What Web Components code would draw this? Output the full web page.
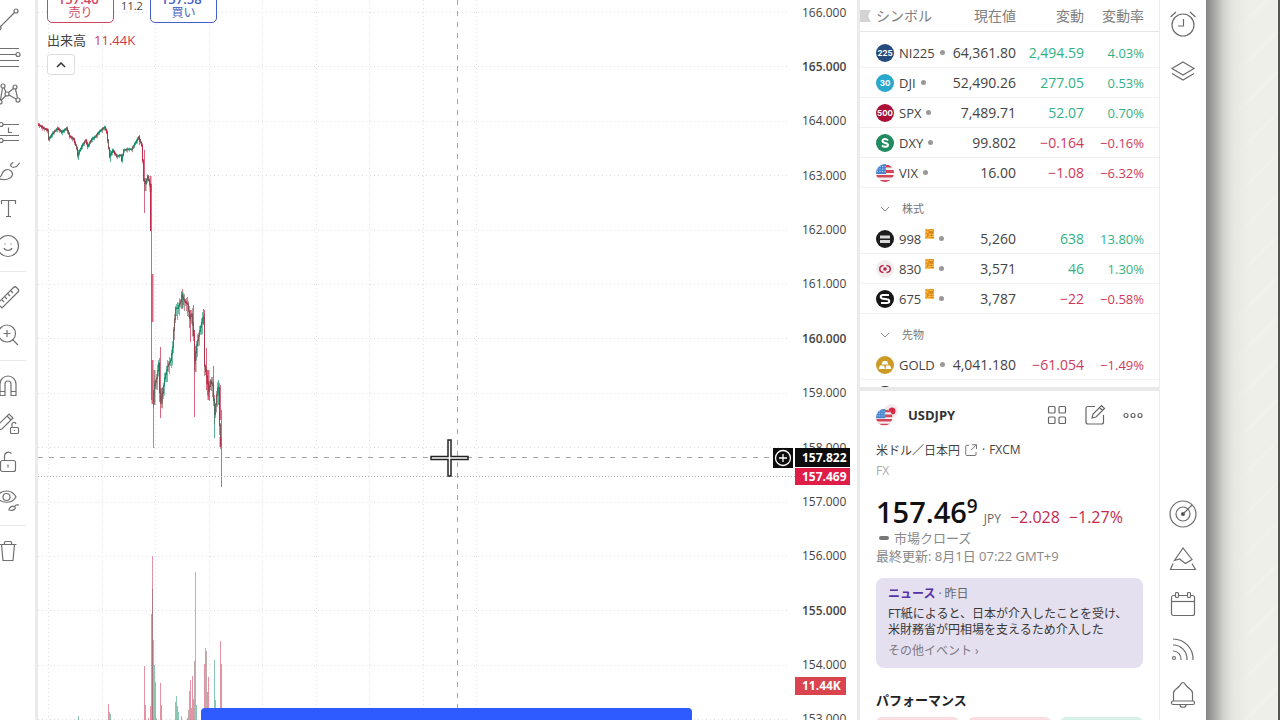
<!DOCTYPE html>
<html lang="ja">
<head>
<meta charset="utf-8">
<title>USDJPY チャート</title>
<style>
html,body{height:100%}
body{margin:0;overflow:hidden;background:#fff;color:#444;font-family:"Open Sans","Noto Sans CJK JP",sans-serif;font-size:12px}
</style>
</head>
<body>
<trading-app></trading-app>
<script>
const ICONS = {
  trend:'<path d="M6 23 20.500 8.500"/><circle cx="22" cy="7" r="2"/><circle cx="5" cy="24" r="2"/>',
  lines:'<path d="M2 6.500h23M2 12.500h20M2 18.500h23M2 24.500h23"/><circle cx="24" cy="12.500" r="2" fill="#fff"/>',
  pattern:'<circle cx="9" cy="6" r="2"/><circle cx="21" cy="7" r="2"/><circle cx="13" cy="14" r="2"/><circle cx="24" cy="20" r="2"/><circle cx="6" cy="22" r="2"/><path d="m10 8 2 4M19.500 8.500 14.500 12.500M21.500 9l2 9M15 15l7 4M7 20.500l5-5M8.500 8 6.500 20"/>',
  forecast:'<path d="M9 6.500h16M2 17.500h23M9 22.500h16M14.500 9.500v5h3.500"/><circle cx="7" cy="6.500" r="2"/><circle cx="7" cy="22.500" r="2"/>',
  brush:'<path d="M3 22c3 0 4-1 5-4 1-4 6-6 9-3s1 7-3 8c-4 1-7 1-11-1M26 7c-2 0-2 4-5 4-3 1-5-1-4-3 1-1 2-1 2-2"/>',
  text:'<path d="M7.500 10V6.500h14V10M14.500 6.500v16M12 22.500h5"/>',
  smile:'<circle cx="14" cy="14" r="10.500"/><path d="M10 16c1 3 7 3 8 0M11 11.500v1M17 11.500v1"/>',
  ruler:'<path d="m3.500 20.500 16-16c1-1 2-1 3 0l1.500 1.500c1 1 1 2 0 3l-16 16zM8 17l2 2M11 14l2 2M14 11l2 2M17 8l2 2"/>',
  zoom:'<circle cx="13" cy="12.500" r="8.500"/><path d="m19 19 5 5M9.500 12.500h7M13 9v7"/>',
  magnet:'<path d="M6 23.500V12a8 8 0 0 1 16 0v11.500h-5V12a3 3 0 0 0-6 0v11.500zM6 19.500h5M17 19.500h5"/>',
  penlock:'<path d="m3 20 1-5L15 4l4 4L8 19zM13 6l4 4"/><rect x="16.500" y="17.500" width="8" height="6" rx="1"/><path d="M18 17v-2a2 2 0 0 1 4-1M20.500 20v1"/>',
  lock:'<rect x="6.500" y="12.500" width="15" height="11" rx="2"/><path d="M10.500 12V8a4 4 0 0 1 7-2.500M14 16.500v3"/>',
  eye:'<path d="M3 11c4-8 15-8 19 0-4 7-15 7-19 0z"/><circle cx="12.500" cy="11" r="3.500"/><path d="M15 24c0-3 4-5 6-3 1 2-1 4-6 3zM21 20c1-2 2-1 4-1"/>',
  trash:'<path d="M5.500 7.500h17M7.500 7.500l1.500 16h10l1.500-16M10.500 7V5.500c0-1 .5-1 1-1h5c1 0 1 .5 1 1V7"/>',
  alarm:'<circle cx="14" cy="15" r="11"/><path d="M14.500 9v7H9M1.500 7 7 2M21 2l5.500 5"/>',
  layers:'<path d="M14 5 25 11.500 14 18 3 11.500zM3 16.500 14 23l11-6.500"/>',
  radar:'<circle cx="14" cy="14" r="13"/><circle cx="14" cy="14" r="7"/><circle cx="14" cy="14" r="1.500" fill="#222"/><path d="m14 14 9-9"/>',
  pyramid:'<path d="M14 3 5.500 15.500l5-1.500 6 4.500 6.500-4zM4 18.500 1.500 24.500h25L23 18.500"/>',
  calendar:'<rect x="2.500" y="5.500" width="23" height="20" rx="2"/><path d="M2.500 11.500h23"/><rect x="6.500" y="2.500" width="3" height="5" rx="1" fill="#fff"/><rect x="18.500" y="2.500" width="3" height="5" rx="1" fill="#fff"/>',
  feed:'<circle cx="5" cy="23" r="1.500"/><path d="M4 16a8 8 0 0 1 8 9M4 10a14 14 0 0 1 14 15M4 4a20 20 0 0 1 20 21"/>',
  bell:'<path d="M4.500 21V13c0-3 3-4 5.500-6.500 2-2 2-4 4-4s2 2 4 4C20.500 9 23.500 10 23.500 13v8"/><rect x="2.500" y="21" width="23" height="3.500" rx="1.500"/><path d="M11 25c0 3 6 3 6 0"/>',
  grid:'<rect x="5.500" y="5.500" width="6.500" height="6.500" rx="1"/><rect x="16" y="5.500" width="6.500" height="6.500" rx="1"/><rect x="5.500" y="16" width="6.500" height="6.500" rx="1"/><rect x="16" y="16" width="6.500" height="6.500" rx="1"/>',
  edit:'<path d="M14 5.500H7a2 2 0 0 0-2 2V21a2 2 0 0 0 2 2h13.500a2 2 0 0 0 2-2v-7M11 17l1-4 8.500-8.500 3 3L15 16zM18.500 6.500l3 3"/>',
  more:'<circle cx="7" cy="14.500" r="2"/><circle cx="14" cy="14.500" r="2"/><circle cx="21" cy="14.500" r="2"/>',
  external:'<path d="M10 4.500H5.500a2 2 0 0 0-2 2V23a2 2 0 0 0 2 2H22a2 2 0 0 0 2-2v-5M16 3.500h9V12M25 3.500l-11 11"/>'
};
const FLAG = '<clipPath id="f"><circle cx="9" cy="9" r="9"/></clipPath><g clip-path="url(#f)"><path fill="#f4f0f2" d="M0 0h18v18H0z"/><path fill="#d2465a" d="M9 1h9v2.500H9zM9 6h9v3H9zM0 11h18v2.500H0zM0 16h18v2H0z"/><path fill="#4a86d0" d="M0 0h10v10H0z"/><path stroke="#bcd8f5" stroke-dasharray="1 1.500" d="M1 2.500h9M1 5h9M1 7.500h9"/></g>';
const num = (bg,t) => `<circle cx="9" cy="9" r="9" fill="${bg}"/><text x="9" y="12" text-anchor="middle" font-family="Inter,sans-serif" font-weight="700" font-size="8" fill="#fff">${t}</text>`;
const LOGOS = {
  n225:num('#254a7c','225'), dji:num('#2aa8cc','30'), spx:num('#ac1037','500'),
  dxy:'<circle cx="9" cy="9" r="9" fill="#218a5e"/><path d="M12 6.500C10 4 6 5 6.500 7.300 7 9.500 12 8.500 12 11c0 2-4 2.600-6 .5" fill="none" stroke="#fff" stroke-width="2"/>',
  flag:FLAG,
  sbg:'<circle cx="9" cy="9" r="9" fill="#1c1c1c"/><path d="M4 5.500h10v3H4zM4 10h10v3H4z" fill="#d8d8d8"/>',
  mufg:'<circle cx="9" cy="9" r="9" fill="#f1eded"/><g fill="none" stroke="#b8244c" stroke-width="1.500"><path d="M7.500 5.500c-5 .5-5 6.500 0 7M10.500 5.500c5 .5 5 6.500 0 7"/></g><circle cx="9" cy="9" r="1.800" fill="#b8244c"/>',
  s675:'<circle cx="9" cy="9" r="9" fill="#161616"/><path d="M13 5H7C4 5 4 8.500 7 8.700l4 .5c3 .3 3 3.800 0 3.800H5" fill="none" stroke="#fff" stroke-width="2"/>',
  gold:'<circle cx="9" cy="9" r="9" fill="#cb9b24"/><path fill="#fff" d="M7 5h4l1.500 3.500h-7zM4 9.500h4L9 13H2.500zM10 9.500h4l1.500 3.500H9.500z"/>',
  dark:'<circle cx="9" cy="9" r="9" fill="#333"/>'
};
class Base extends HTMLElement{
  constructor(){super();this.attachShadow({mode:'open'})}
  connectedCallback(){this.shadowRoot.innerHTML='<style>*{box-sizing:border-box}button{font:inherit;color:inherit;background:none;border:0;padding:0;margin:0}a{color:inherit;text-decoration:none}'+this.css()+'</style>'+this.html()}
  css(){return''} html(){return'<slot></slot>'}
}
customElements.define('ui-icon',class extends Base{
  css(){return':host{display:block;width:28px;height:28px;flex:none}svg{display:block;width:100%;height:100%}'}
  html(){return`<svg viewBox="0 0 28 28" fill="none" stroke="currentColor" stroke-width="${this.getAttribute('stroke')||1.2}" aria-hidden="true">${ICONS[this.getAttribute('name')]}</svg>`}
});
customElements.define('symbol-logo',class extends Base{
  css(){return':host{display:block;width:18px;height:18px;flex:none}svg{display:block;width:100%;height:100%}'}
  html(){return`<svg viewBox="0 0 18 18" aria-hidden="true">${LOGOS[this.getAttribute('name')]}</svg>`}
});
customElements.define('drawing-toolbar',class extends Base{
  css(){return`:host{display:block;width:38px;flex:none;overflow:hidden;border-right:3px solid #ebebeb;color:#707070}
   nav{display:flex;flex-direction:column;margin-top:-1px}button{width:28px;height:38px;margin-left:-6px;display:grid;place-items:center;flex:none}
   hr{width:26px;height:1px;border:0;background:#e8e8e8;margin:6px 0;flex:none}`}
  html(){const b=(n,l)=>`<button aria-label="${l}"><ui-icon name="${n}"></ui-icon></button>`;
   return`<nav>${b('trend','トレンドライン')}${b('lines','フィボナッチ')}${b('pattern','パターン')}${b('forecast','予測')}${b('brush','ブラシ')}${b('text','テキスト')}${b('smile','アイコン')}<hr>${b('ruler','計測')}${b('zoom','ズーム')}<hr>${b('magnet','マグネット')}${b('penlock','描画モード維持')}${b('lock','ロック')}${b('eye','非表示')}<hr>${b('trash','削除')}</nav>`}
});
customElements.define('side-rail',class extends Base{
  css(){return`:host{display:flex;flex-direction:column;justify-content:space-between;width:47px;flex:none;border-left:1px solid #ececec;color:#6c6c6c;padding:1px 0 4px}
   div{display:flex;flex-direction:column}.top{gap:2px}button{height:45px;display:grid;place-items:center}`}
  html(){const b=(n,l)=>`<button aria-label="${l}"><ui-icon name="${n}"></ui-icon></button>`;
   return`<div class="top">${b('alarm','アラート')}${b('layers','オブジェクト')}</div><div>${b('radar','スクリーナー')}${b('pyramid','パイン')}${b('calendar','カレンダー')}${b('feed','ニュース')}${b('bell','通知')}</div>`}
});
customElements.define('price-plot',class extends Base{
  css(){return':host{display:block;min-width:0;min-height:0;overflow:hidden}svg{display:block;width:100%;height:100%}'}
  html(){
    const R='#c8284a',G='#17906c',D='#7c5a58';
    let s='';
    for(let i=0;i<14;i++){const y=Math.round(12+i*54.4)+.5;s+=`<path d="M38 ${y}H790" stroke="#dedede" stroke-dasharray="1 3"/>`}
    for(let i=0;i<9;i++){const x=Math.round(48+i*53.5)+.5;s+=`<path d="M${x} 0V720" stroke="#e4e4e4" stroke-dasharray="1 3"/>`}
    const vol=[[78,716,G],[108,704,R],[109,712,D],[110,714,G],[144,666,R],[145,705,R],[148,718,R],[150,706,R],[151,614,R],[152,556,R],[152,589,D],[153,640,D],[154,665,G],[155,682,D],[156,718,D],[160,683,R],[161,705,R],[175,702,G],[176,696,G],[177,706,D],[178,712,G],[181,716,G],[187,718,R],[188,710,D],[189,691,D],[190,680,R],[191,708,R],[192,676,R],[193,699,R],[194,661,D],[195,572,G],[196,705,G],[204,664,R],[205,648,D],[206,651,D],[207,692,R],[208,677,R],[214,660,G],[215,700,D],[220,641,R],[221,664,R]];
    for(const[x,y,c]of vol)s+=`<path d="M${x+.5} ${y}V720" stroke="${c}" stroke-opacity=".5"/>`;
    const k=[[38,124],[44,128],[48,130],[49,139],[53,133],[58,128],[62,132],[67,128],[70,136],[74,139],[77,148],[78,155],[82,146],[86,140],[88,146],[92,139],[96,136],[100,131],[105,127],[107,132],[109,148],[110,156],[113,150],[117,156],[121,155],[122,160],[124,150],[128,149],[132,149],[136,142],[139,137],[142,145],[143,160],[144,180],[146,183],[148,176],[150,184],[151,230]];
    const k2=[[153,402],[155,385],[157,378],[159,363],[160,392],[161,400],[163,393],[165,378],[168,366],[171,360],[173,347],[174,330],[176,308],[178,308],[181,301],[182,295],[185,301],[188,304],[190,318],[192,314],[194,335],[195,360],[197,345],[200,331],[203,318],[204,318],[205,366],[207,376],[209,391],[211,381],[213,385],[214,400],[215,414],[217,395],[218,388],[219,388],[220,425],[221,445]];
    const draw=(a,amp)=>{for(let i=0;i<a.length-1;i++){const[x0,y0]=a[i],[x1,y1]=a[i+1];
      for(let x=x0;x<x1;x++){const p=y0+(y1-y0)*(x-x0)/(x1-x0),q=y0+(y1-y0)*(x+1-x0)/(x1-x0);
       const w=amp*(1+((x*7)%5)/2),t=Math.min(p,q),b=Math.max(p,q),c=q>p?(x%4?R:D):(x%3?G:D);
       s+=`<path d="M${x+.5} ${t-w/2}V${b+w}" stroke="${c}" stroke-opacity=".6"/><path d="M${x+.5} ${t-.5}V${b+1}" stroke="${c}"/>`}}};
    draw(k,1.1);draw(k2,4);
    for(const[x,a,b,c,w]of[[78,150,160,G,1],[110,150,162,G,1],[139,135,145,R,1],[144,150,213,R,1],[145,178,191,D,2],[150,176,192,R,2],[151,184,400,R,1],[152,274,322,R,2],[152,360,404,R,2],[153,390,448,G,1],[154,370,405,D,2],[160,347,418,R,1],[161,388,404,D,3],[182,292,308,G,2],[190,310,342,R,1],[193,305,330,R,1],[194,330,417,R,1],[195,346,372,D,2],[203,309,325,G,1],[204,310,366,R,1],[206,348,390,R,1],[208,370,400,R,2],[213,366,390,R,1],[214,398,438,G,1],[218,380,405,G,1],[220,385,420,R,1],[220,437,447,R,2],[221,410,487,R,1]])
      s+=`<path d="M${x+.5} ${a}V${b}" stroke="${c}" stroke-width="${w}" stroke-opacity=".7"/>`;
    return`<svg role="img" aria-label="USDJPY チャート"><g transform="translate(-38 0)" fill="none">${s}
     <path d="M38 476.500H795" stroke="#aaa" stroke-dasharray="1 2"/><path d="M38 457.500H772" stroke="#a4a4a4" stroke-dasharray="5 6"/><path d="M457.500 0V720" stroke="#a4a4a4" stroke-dasharray="5 6"/>
     <path d="M448 440h3v16.500h17v3h-17V476h-3v-16.500h-17v-3h17z" fill="#fff" stroke="#222" stroke-width="1.500"/></g></svg>`}
});
customElements.define('price-axis',class extends Base{
  css(){return`:host{display:block;overflow:hidden;height:100%;font-size:12px;color:#444}
   ol{list-style:none;padding:0 0 0 7px;margin:-15px 0 0;height:calc(100% + 41px);display:grid;grid-template-rows:repeat(14,1fr);align-items:center}.major{font-weight:600}`}
  html(){let s='';for(let p=166;p>=153;p--)s+=`<li class="${p%5?'':'major'}">${p}.000</li>`;return`<ol>${s}</ol>`}
});
customElements.define('price-tag',class extends Base{
  css(){return`:host{display:flex;align-items:center;height:19px;padding-left:7px;color:#fff;font-size:12px;font-weight:700;line-height:18px}`}
});
customElements.define('chart-pane',class extends Base{
  css(){return`:host{display:grid;grid-template-columns:minmax(0,1fr) 62px;grid-template-rows:minmax(0,1fr);flex:1;min-width:0;position:relative;overflow:hidden}
   .legend{position:absolute;left:9px;top:-15px;display:flex;flex-direction:column;align-items:flex-start}
   .trade{display:flex;gap:3px;margin-bottom:7px}.trade button{width:67px;height:38px;border:1px solid;border-radius:5px;background:#fff;display:flex;flex-direction:column;align-items:center;line-height:14px;padding-top:6px}
   .trade b{font-size:13px;font-weight:600}.trade sup{font-size:8px;line-height:0}.sell{color:#d0455c}.buy{color:#4460c8}.trade output{width:30px;text-align:center;font-size:11px;line-height:42px;height:38px;color:#444}
   .vol{display:flex;gap:8px;font-size:13px;line-height:20px}.vol span+span{color:#d0384c}
   .fold{width:28px;height:21px;margin-top:4px;border:1px solid #ddd;border-radius:3px;background:#fff;display:grid;place-items:center}
   price-tag{position:absolute;right:7px;width:55px}.cross{top:448px;background:#0c0c0c}.last{top:468px;height:17px;background:#e01c48}.volume{top:677px;right:11px;width:51px;height:18px;background:#d9444e}
   .add{position:absolute;right:64px;top:448px;width:20px;height:20px;background:#0c0c0c}.add svg,.fold svg{display:block}
   .toast{position:absolute;left:163px;bottom:0;width:491px;height:12px;background:#2d5bff;border-radius:4px 4px 0 0}`}
  html(){return`<price-plot></price-plot><price-axis></price-axis>
   <div class="legend"><div class="trade"><button class="sell"><b>157.46<sup>9</sup></b>売り</button><output>11.2</output><button class="buy"><b>157.58<sup>1</sup></b>買い</button></div>
   <div class="vol"><span>出来高</span><span>11.44K</span></div><button class="fold" aria-label="折りたたむ"><svg width="10" height="6" fill="none" stroke="#333" stroke-width="1.500"><path d="m1 5 4-4 4 4"/></svg></button></div>
   <button class="add" aria-label="追加"><svg width="20" height="20" fill="none" stroke="#fff" stroke-width="1.300"><circle cx="10" cy="10" r="7.500"/><path d="M10 6v8M6 10h8"/></svg></button>
   <price-tag class="cross">157.822</price-tag><price-tag class="last">157.469</price-tag><price-tag class="volume">11.44K</price-tag><div class="toast"></div>`}
});
customElements.define('watch-list',class extends Base{
  css(){return`:host{display:block;height:387px;overflow:hidden;flex:none}
   table{width:100%;table-layout:fixed;border-collapse:separate;border-spacing:0}
   th{font-weight:400;color:#808080;font-size:14px;height:32px;padding:0;border-bottom:1px solid #e6e6e6;text-align:right;line-height:20px}
   th:first-child{text-align:left}th:last-child,td:last-child{padding-right:15px}.flag{display:flex;align-items:center;gap:5px;white-space:nowrap}
   td{height:30px;padding:0;border-bottom:1px solid #f0f0f0;font-size:14px;text-align:right;line-height:20px;white-space:nowrap}td:last-child{font-size:13px}
   .gap td{height:6px;border:0}.group td{height:36px;text-align:left;font-size:11px;color:#777;padding:6px 0 0 20px;border:0}.group div{display:flex;align-items:center;gap:12px}
   .sym{display:flex;align-items:center;padding-left:16px;font-size:13px}.sym symbol-logo{margin-right:5px}.sym i{width:5px;height:5px;border-radius:50%;background:#999;margin-left:5px}
   .sym sup{font-size:9px;line-height:10px;color:#c87400;background:#ffc050;margin:0 0 10px 4px}.up{color:#32b184}.down{color:#d03a5a}
   .c2{width:70px}.c3{width:68px}.c4{width:75px}`}
  html(){
   const r=(l,n,p,c,q,late)=>`<tr><td><div class="sym"><symbol-logo name="${l}"></symbol-logo>${n}${late?'<sup>遅</sup>':''}${n?'<i></i>':''}</div></td><td>${p}</td><td class="${c[0]=='−'?'down':'up'}">${c}</td><td class="${c[0]=='−'?'down':'up'}">${q}</td></tr>`;
   const g=t=>`<tr class="group"><td colspan="4"><div><svg width="10" height="6" fill="none" stroke="#888"><path d="m1 1 4 4 4-4"/></svg>${t}</div></td></tr>`;
   return`<table><colgroup><col><col class="c2"><col class="c3"><col class="c4"></colgroup><thead><tr><th><div class="flag"><svg width="11" height="12" fill="#d4d4d4"><path d="M0 0h11l-3 6 3 6H0z"/></svg>シンボル</div></th><th>現在値</th><th>変動</th><th>変動率</th></tr></thead><tbody><tr class="gap"><td colspan="4"></td></tr>
   ${r('n225','NI225','64,361.80','2,494.59','4.03%')}${r('dji','DJI','52,490.26','277.05','0.53%')}${r('spx','SPX','7,489.71','52.07','0.70%')}${r('dxy','DXY','99.802','−0.164','−0.16%')}${r('flag','VIX','16.00','−1.08','−6.32%')}
   ${g('株式')}${r('sbg','998','5,260','638','13.80%',1)}${r('mufg','830','3,571','46','1.30%',1)}${r('s675','675','3,787','−22','−0.58%',1)}${g('先物')}${r('gold','GOLD','4,041.180','−61.054','−1.49%')}${r('dark','','','','')}</tbody></table>`}
});
customElements.define('news-card',class extends Base{
  css(){return`:host{display:block;background:#e5e0ef;border-radius:8px;padding:8px 12px;height:90px;font-size:12px;line-height:16px;color:#383838}
   header{color:#666}b{color:#5632a8;margin-right:3px}time{margin-left:3px}p{margin:4px 0 5px}footer{color:#7c7884}`}
  html(){return`<header><b><slot name="kind"></slot></b>·<time><slot name="when"></slot></time></header><p><slot></slot></p><footer><slot name="more"></slot></footer>`}
});
customElements.define('symbol-detail',class extends Base{
  css(){return`:host{display:flex;flex-direction:column;flex:1;min-height:0;overflow:hidden;border-top:4px solid #e9e9e9;padding:0 16px}
   header{display:flex;align-items:center;height:48px;gap:10px;flex:none}h2{font-size:13px;font-weight:700;margin:0;flex:1;color:#333}.pair{width:22px;height:22px}
   .tools{display:flex;gap:10px;margin-right:-4px;color:#666}.name{display:flex;align-items:center;gap:4px;height:21px;flex:none;color:#444}.name ui-icon{width:14px;height:14px;color:#777}
   .kind{color:#aaa;line-height:21px;flex:none}.price{display:flex;align-items:baseline;margin-top:12px;height:36px;line-height:38px;flex:none;white-space:nowrap}
   .price b{font-size:29px;font-weight:600;color:#111}.price sup{font-size:19px;line-height:19px;font-weight:600;color:#111;align-self:flex-start;margin-top:4px}.price small{font-size:12px;color:#666;margin:0 9px 0 6px}.price span{font-size:16px;font-weight:500;color:#c42a4c;margin-right:9px}
   .state{display:flex;align-items:center;gap:5px;color:#888;font-size:13px;line-height:18px;height:18px;flex:none}.state i{width:10px;height:4px;border-radius:2px;background:#777;margin-left:3px}
   .time{color:#888;font-size:13px;line-height:18px;white-space:nowrap;margin-bottom:13px;flex:none}news-card{flex:none}
   h3{font-size:13px;line-height:20px;margin:22px 0 7px;color:#222;flex:none}.perf{display:grid;grid-template-columns:repeat(3,1fr);gap:9px;flex:none}.perf div{height:48px;border-radius:6px;background:#fbdde1}.perf .up{background:#d6f1e7}`}
  html(){return`<header><svg class="pair" viewBox="0 0 22 22"><circle cx="15" cy="7" r="7" fill="#f0eaec"/><circle cx="16" cy="7" r="3.500" fill="#d52a48"/><g transform="translate(0 5) scale(.92)">${FLAG}</g></svg><h2>USDJPY</h2>
   <div class="tools"><button aria-label="グリッド"><ui-icon name="grid"></ui-icon></button><button aria-label="メモ"><ui-icon name="edit"></ui-icon></button><button aria-label="その他"><ui-icon name="more"></ui-icon></button></div></header>
   <div class="name"><a href="#">米ドル／日本円</a><ui-icon name="external" stroke="2"></ui-icon><span>·</span><span>FXCM</span></div><div class="kind">FX</div>
   <div class="price"><b>157.46</b><sup>9</sup><small>JPY</small><span>−2.028</span><span>−1.27%</span></div>
   <div class="state"><i></i>市場クローズ</div><div class="time">最終更新: 8月1日 07:22 GMT+9</div>
   <news-card><span slot="kind">ニュース</span><span slot="when">昨日</span>FT紙によると、日本が介入したことを受け、<br>米財務省が円相場を支えるため介入した<a slot="more" href="#">その他イベント ›</a></news-card>
   <h3>パフォーマンス</h3><div class="perf"><div></div><div></div><div class="up"></div></div>`}
});
customElements.define('desk-edge',class extends Base{
  css(){return`:host{display:block;width:74px;flex:none;border-right:2px solid #55564f;background:linear-gradient(90deg,#858583,#aaaaa7 9px,#d2d2ce 18px,#e8e8e3 28px,transparent 44px),repeating-linear-gradient(135deg,#efefe9 0 12px,#f1f1ec 14px 15px,#efefe9 17px 29px)}`}
});
customElements.define('trading-app',class extends Base{
  css(){return`:host{display:flex;height:100vh;overflow:hidden}aside{width:302px;flex:none;border-left:3px solid #ebebeb;display:flex;flex-direction:column;min-height:0}`}
  html(){return`<drawing-toolbar></drawing-toolbar><chart-pane></chart-pane><aside><watch-list></watch-list><symbol-detail></symbol-detail></aside><side-rail></side-rail><desk-edge></desk-edge>`}
});
</script>
</body>
</html>
